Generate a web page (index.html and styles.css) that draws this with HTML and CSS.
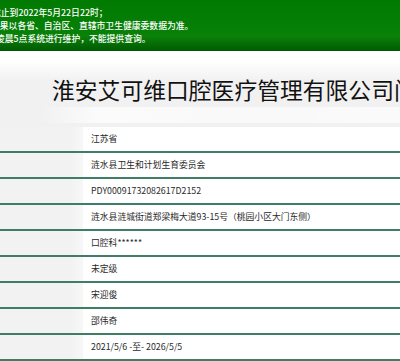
FILE: index.html
```html
<!DOCTYPE html>
<html lang="zh-CN">
<head>
<meta charset="utf-8">
<title>医疗机构查询</title>
<link rel="stylesheet" href="styles.css">
</head>
<body>
<div class="notice">
  <div class="line l1">截止到2022年5月22日22时；</div>
  <div class="line l2">结果以各省、自治区、直辖市卫生健康委数据为准。</div>
  <div class="line l3">凌晨5点系统进行维护，不能提供查询。</div>
</div>
<div class="title-band">
  <h1 class="title">淮安艾可维口腔医疗管理有限公司门诊部</h1>
</div>
<div class="info">
  <div class="row"><div class="label"></div><div class="value">江苏省</div></div>
  <div class="row"><div class="label"></div><div class="value">涟水县卫生和计划生育委员会</div></div>
  <div class="row"><div class="label"></div><div class="value">PDY00091732082617D2152</div></div>
  <div class="row"><div class="label"></div><div class="value">涟水县涟城街道郑梁梅大道93-15号（桃园小区大门东侧）</div></div>
  <div class="row"><div class="label"></div><div class="value">口腔科******</div></div>
  <div class="row"><div class="label"></div><div class="value">未定级</div></div>
  <div class="row"><div class="label"></div><div class="value">宋迎俊</div></div>
  <div class="row"><div class="label"></div><div class="value">邵伟奇</div></div>
  <div class="row"><div class="label"></div><div class="value">2021/5/6 -至- 2026/5/5</div></div>
</div>
</body>
</html>
```
FILE: styles.css
```css
html, body {
  margin: 0;
  padding: 0;
  width: 400px;
  overflow: hidden;
  background: #ffffff;
  font-family: "Noto Sans CJK SC", "Noto Sans", sans-serif;
}

.notice {
  height: 51px;
  box-sizing: border-box;
  padding-top: 6px;
  background: linear-gradient(#007a00 0%, #067f06 55%, #0a820a 70%, #005a00 100%);
  color: #ffffff;
  font-size: 8.8px;
  font-weight: 500;
  line-height: 13px;
  overflow: hidden;
  white-space: nowrap;
}

.line.l1 { margin-left: -8px; }
.line.l2 { margin-left: -9px; }
.line.l3 { margin-left: -4px; }

.title-band {
  height: 76px;
  box-sizing: border-box;
  padding: 24px 0 0 52px;
  background:
    linear-gradient(to right, rgba(255,255,255,0) 0, rgba(255,255,255,0.75) 60px, rgba(255,255,255,0.55) 200px, rgba(255,255,255,0.7) 400px) 40px 56px / 360px 16px no-repeat,
    linear-gradient(#ffffff 0, #ffffff 10px, #f1f1f1 30px, #f1f1f1 100%);
  overflow: hidden;
  white-space: nowrap;
}

.title {
  margin: 0;
  font-size: 22.8px;
  line-height: 30px;
  font-weight: 400;
  color: #111111;
}

.row {
  display: grid;
  grid-template-columns: 83px 1fr;
  height: 26px;
  box-sizing: border-box;
  border-bottom: 2px solid #3f7d66;
}

.label {
  background: linear-gradient(to right, #f2f2f2 0, #f2f2f2 70px, #f7f7f7 83px);
}

.value {
  padding-left: 8px;
  font-size: 8.8px;
  line-height: 24px;
  color: #2a2a2a;
  white-space: nowrap;
}
```
